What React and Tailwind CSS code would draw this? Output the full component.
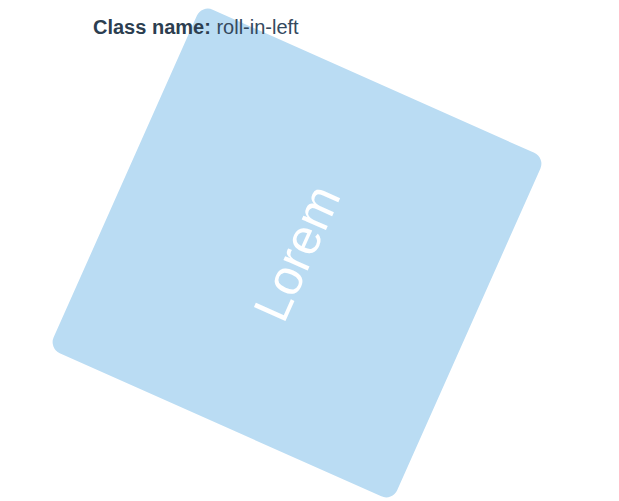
export default function App() {
  return (
    <div className="w-[619px] h-[501px] overflow-hidden bg-white pt-[15px]" style={{ fontFamily: '"Liberation Sans", Arial, sans-serif' }}>
      <p className="relative z-10 ml-[93px] text-[20px] leading-[24px] text-[#34495e]">
        <span className="font-bold text-[#2c3e50]">Class name:</span> roll-in-left
      </p>
      <div className="ml-[109px] mt-[26px] w-[376px] h-[376px] rounded-[12px] bg-[#badcf3] flex items-center justify-center rotate-[-66deg]">
        <span className="text-white text-[50px] leading-none">Lorem</span>
      </div>
    </div>
  );
}
